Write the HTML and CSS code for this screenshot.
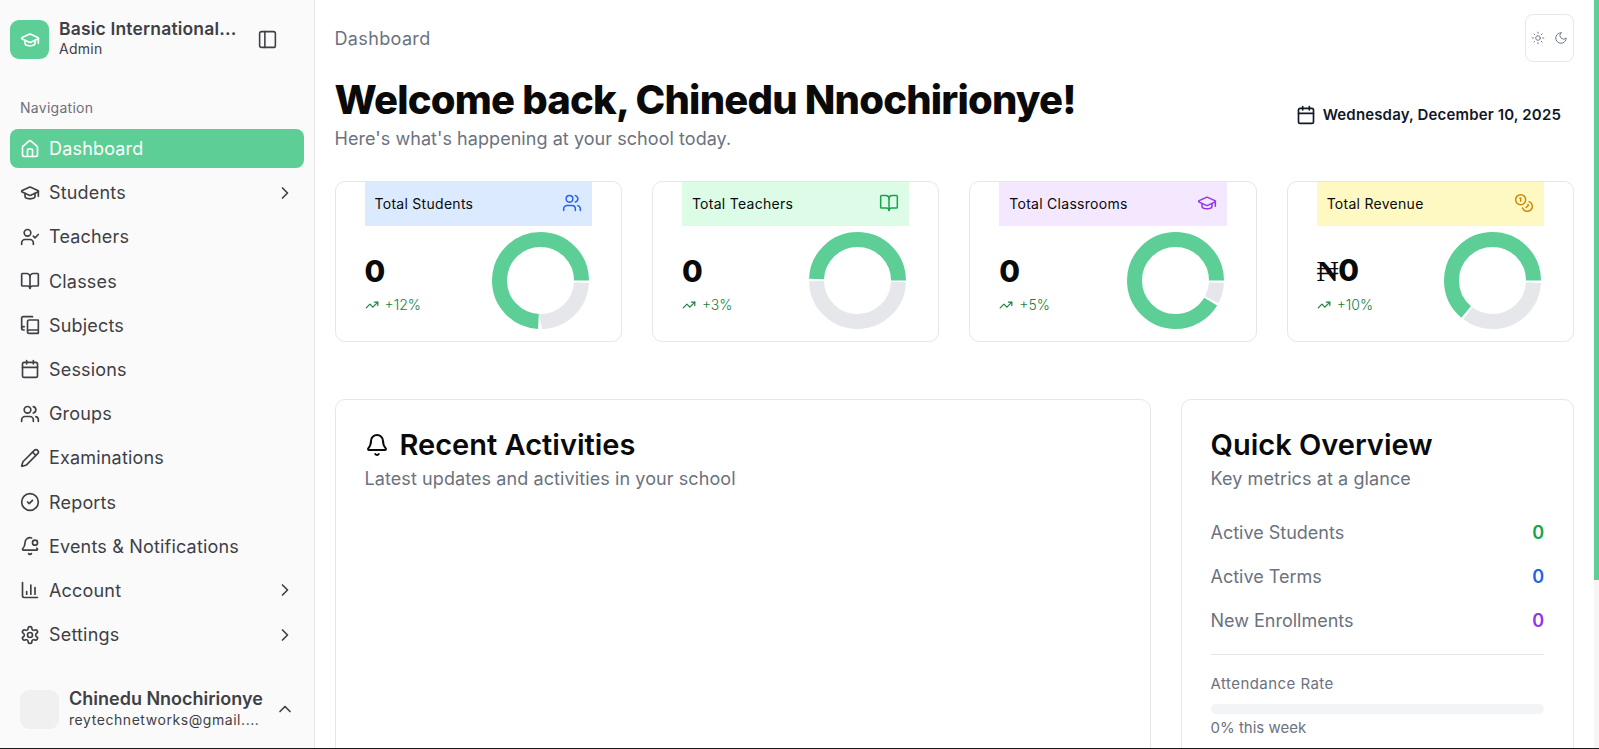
FILE: index.html
```html
<!DOCTYPE html>
<html lang="en">
<head>
    <meta charset="UTF-8">
    <meta name="viewport" content="width=device-width, initial-scale=1.0">
    <title>Dashboard</title>
    <link rel="stylesheet" href="styles.css">
</head>
<body>
    <!-- Lucide icons -->
    <svg class="sprite" xmlns="http://www.w3.org/2000/svg">
        <symbol id="i-cap" viewBox="0 0 24 24"><path d="M21.42 10.922a1 1 0 0 0-.019-1.838L12.83 5.18a2 2 0 0 0-1.66 0L2.6 9.08a1 1 0 0 0 0 1.832l8.57 3.908a2 2 0 0 0 1.66 0z"/><path d="M22 10v6"/><path d="M6 12.5V16a6 3 0 0 0 12 0v-3.5"/></symbol>
        <symbol id="i-panel" viewBox="0 0 24 24"><rect width="18" height="18" x="3" y="3" rx="2"/><path d="M9 3v18"/></symbol>
        <symbol id="i-house" viewBox="0 0 24 24"><path d="M15 21v-8a1 1 0 0 0-1-1h-4a1 1 0 0 0-1 1v8"/><path d="M3 10a2 2 0 0 1 .709-1.528l7-5.999a2 2 0 0 1 2.582 0l7 5.999A2 2 0 0 1 21 10v9a2 2 0 0 1-2 2H5a2 2 0 0 1-2-2z"/></symbol>
        <symbol id="i-user-check" viewBox="0 0 24 24"><path d="M16 21v-2a4 4 0 0 0-4-4H6a4 4 0 0 0-4 4v2"/><circle cx="9" cy="7" r="4"/><path d="m16 11 2 2 4-4"/></symbol>
        <symbol id="i-book" viewBox="0 0 24 24"><path d="M12 7v14"/><path d="M3 18a1 1 0 0 1-1-1V4a1 1 0 0 1 1-1h5a4 4 0 0 1 4 4 4 4 0 0 1 4-4h5a1 1 0 0 1 1 1v13a1 1 0 0 1-1 1h-6a3 3 0 0 0-3 3 3 3 0 0 0-3-3z"/></symbol>
        <symbol id="i-book-copy" viewBox="0 0 24 24"><path d="M2 16V4a2 2 0 0 1 2-2h11"/><path d="M22 18H11a2 2 0 1 0 0 4h10.5a.5.5 0 0 0 .5-.5v-15a.5.5 0 0 0-.5-.5H11a2 2 0 0 0-2 2v12"/><path d="M5 14H4a2 2 0 1 0 0 4h1"/></symbol>
        <symbol id="i-calendar" viewBox="0 0 24 24"><path d="M8 2v4"/><path d="M16 2v4"/><rect width="18" height="18" x="3" y="4" rx="2"/><path d="M3 10h18"/></symbol>
        <symbol id="i-users" viewBox="0 0 24 24"><path d="M16 21v-2a4 4 0 0 0-4-4H6a4 4 0 0 0-4 4v2"/><circle cx="9" cy="7" r="4"/><path d="M22 21v-2a4 4 0 0 0-3-3.87"/><path d="M16 3.13a4 4 0 0 1 0 7.75"/></symbol>
        <symbol id="i-pencil" viewBox="0 0 24 24"><path d="M21.174 6.812a1 1 0 0 0-3.986-3.987L3.842 16.174a2 2 0 0 0-.5.83l-1.321 4.352a.5.5 0 0 0 .623.622l4.353-1.32a2 2 0 0 0 .83-.497z"/><path d="m15 5 4 4"/></symbol>
        <symbol id="i-check" viewBox="0 0 24 24"><circle cx="12" cy="12" r="10"/><path d="m9 12 2 2 4-4"/></symbol>
        <symbol id="i-bell-dot" viewBox="0 0 24 24"><path d="M10.268 21a2 2 0 0 0 3.464 0"/><path d="M13.916 2.314A6 6 0 0 0 6 8c0 4.499-1.411 5.956-2.74 7.327A1 1 0 0 0 4 17h16a1 1 0 0 0 .74-1.673 9 9 0 0 1-.585-.665"/><circle cx="18" cy="8" r="3"/></symbol>
        <symbol id="i-chart" viewBox="0 0 24 24"><path d="M3 3v16a2 2 0 0 0 2 2h16"/><path d="M8 17v-3"/><path d="M13 17V6"/><path d="M18 17V9"/></symbol>
        <symbol id="i-gear" viewBox="0 0 24 24"><path d="M12.22 2h-.44a2 2 0 0 0-2 2v.18a2 2 0 0 1-1 1.73l-.43.25a2 2 0 0 1-2 0l-.15-.08a2 2 0 0 0-2.73.73l-.22.38a2 2 0 0 0 .73 2.73l.15.1a2 2 0 0 1 1 1.72v.51a2 2 0 0 1-1 1.74l-.15.09a2 2 0 0 0-.73 2.73l.22.38a2 2 0 0 0 2.73.73l.15-.08a2 2 0 0 1 2 0l.43.25a2 2 0 0 1 1 1.73V20a2 2 0 0 0 2 2h.44a2 2 0 0 0 2-2v-.18a2 2 0 0 1 1-1.73l.43-.25a2 2 0 0 1 2 0l.15.08a2 2 0 0 0 2.73-.73l.22-.39a2 2 0 0 0-.73-2.73l-.15-.08a2 2 0 0 1-1-1.74v-.5a2 2 0 0 1 1-1.74l.15-.09a2 2 0 0 0 .73-2.73l-.22-.38a2 2 0 0 0-2.73-.73l-.15.08a2 2 0 0 1-2 0l-.43-.25a2 2 0 0 1-1-1.73V4a2 2 0 0 0-2-2z"/><circle cx="12" cy="12" r="3"/></symbol>
        <symbol id="i-right" viewBox="0 0 24 24"><path d="m9 18 6-6-6-6"/></symbol>
        <symbol id="i-up" viewBox="0 0 24 24"><path d="m18 15-6-6-6 6"/></symbol>
        <symbol id="i-sun" viewBox="0 0 24 24"><circle cx="12" cy="12" r="4"/><path d="M12 2v2"/><path d="M12 20v2"/><path d="m4.93 4.93 1.41 1.41"/><path d="m17.66 17.66 1.41 1.41"/><path d="M2 12h2"/><path d="M20 12h2"/><path d="m6.34 17.66-1.41 1.41"/><path d="m19.07 4.93-1.41 1.41"/></symbol>
        <symbol id="i-moon" viewBox="0 0 24 24"><path d="M12 3a6 6 0 0 0 9 9 9 9 0 1 1-9-9Z"/></symbol>
        <symbol id="i-trend" viewBox="0 0 24 24"><path d="M22 7 13.5 15.5 8.5 10.5 2 17"/><path d="M16 7h6v6"/></symbol>
        <symbol id="i-coins" viewBox="0 0 24 24"><circle cx="8" cy="8" r="6"/><path d="M18.09 10.37A6 6 0 1 1 10.34 18"/><path d="M7 6h1v4"/><path d="m16.71 13.88.7.71-2.82 2.82"/></symbol>
        <symbol id="i-bell" viewBox="0 0 24 24"><path d="M10.268 21a2 2 0 0 0 3.464 0"/><path d="M3.262 15.326A1 1 0 0 0 4 17h16a1 1 0 0 0 .74-1.673C19.41 13.956 18 12.499 18 8A6 6 0 0 0 6 8c0 4.499-1.411 5.956-2.738 7.326"/></symbol>
    </svg>

    <div class="app">
        <aside class="sidebar">
            <div class="brand">
                <div class="brand-logo"><svg class="icon"><use href="#i-cap"/></svg></div>
                <div class="brand-text">
                    <div class="brand-name">Basic International...</div>
                    <div class="brand-role">Admin</div>
                </div>
                <svg class="icon panel-toggle"><use href="#i-panel"/></svg>
            </div>

            <div class="nav-label">Navigation</div>

            <nav class="nav">
                <a class="nav-item active"><svg class="icon"><use href="#i-house"/></svg><span>Dashboard</span></a>
                <a class="nav-item"><svg class="icon"><use href="#i-cap"/></svg><span>Students</span><svg class="icon chevron"><use href="#i-right"/></svg></a>
                <a class="nav-item"><svg class="icon"><use href="#i-user-check"/></svg><span>Teachers</span></a>
                <a class="nav-item"><svg class="icon"><use href="#i-book"/></svg><span>Classes</span></a>
                <a class="nav-item"><svg class="icon"><use href="#i-book-copy"/></svg><span>Subjects</span></a>
                <a class="nav-item"><svg class="icon"><use href="#i-calendar"/></svg><span>Sessions</span></a>
                <a class="nav-item"><svg class="icon"><use href="#i-users"/></svg><span>Groups</span></a>
                <a class="nav-item"><svg class="icon"><use href="#i-pencil"/></svg><span>Examinations</span></a>
                <a class="nav-item"><svg class="icon"><use href="#i-check"/></svg><span>Reports</span></a>
                <a class="nav-item"><svg class="icon"><use href="#i-bell-dot"/></svg><span>Events &amp; Notifications</span></a>
                <a class="nav-item"><svg class="icon"><use href="#i-chart"/></svg><span>Account</span><svg class="icon chevron"><use href="#i-right"/></svg></a>
                <a class="nav-item"><svg class="icon"><use href="#i-gear"/></svg><span>Settings</span><svg class="icon chevron"><use href="#i-right"/></svg></a>
            </nav>

            <div class="user">
                <div class="user-avatar"></div>
                <div class="user-text">
                    <div class="user-name">Chinedu Nnochirionye</div>
                    <div class="user-mail">reytechnetworks@gmail....</div>
                </div>
                <svg class="icon user-chevron"><use href="#i-up"/></svg>
            </div>
        </aside>

        <main class="main">
            <div class="topbar">
                <div class="crumb">Dashboard</div>
                <div class="theme-toggle">
                    <svg class="icon"><use href="#i-sun"/></svg>
                    <svg class="icon"><use href="#i-moon"/></svg>
                </div>
            </div>

            <div class="hero">
                <div>
                    <h1>Welcome back, Chinedu Nnochirionye!</h1>
                    <p>Here's what's happening at your school today.</p>
                </div>
                <div class="hero-date">
                    <svg class="icon"><use href="#i-calendar"/></svg>
                    <span>Wednesday, December 10, 2025</span>
                </div>
            </div>

            <div class="stats">
                <div class="stat">
                    <div class="stat-head blue"><span>Total Students</span><svg class="icon"><use href="#i-users"/></svg></div>
                    <div class="stat-body">
                        <div class="stat-numbers">
                            <div class="stat-value">0</div>
                            <div class="stat-trend"><svg class="icon"><use href="#i-trend"/></svg>+12%</div>
                        </div>
                        <svg class="donut" viewBox="0 0 97 97">
                            <circle class="arc-rest" cx="48.5" cy="48.5" r="41" pathLength="360" stroke-dasharray="87 273" stroke-dashoffset="-270"/>
                            <circle class="arc-fill" cx="48.5" cy="48.5" r="41" pathLength="360" stroke-dasharray="267 93"/>
                        </svg>
                    </div>
                </div>

                <div class="stat">
                    <div class="stat-head green"><span>Total Teachers</span><svg class="icon"><use href="#i-book"/></svg></div>
                    <div class="stat-body">
                        <div class="stat-numbers">
                            <div class="stat-value">0</div>
                            <div class="stat-trend"><svg class="icon"><use href="#i-trend"/></svg>+3%</div>
                        </div>
                        <svg class="donut" viewBox="0 0 97 97">
                            <circle class="arc-rest" cx="48.5" cy="48.5" r="41" pathLength="360" stroke-dasharray="177 183" stroke-dashoffset="-181"/>
                            <circle class="arc-fill" cx="48.5" cy="48.5" r="41" pathLength="360" stroke-dasharray="178 182"/>
                        </svg>
                    </div>
                </div>

                <div class="stat">
                    <div class="stat-head purple"><span>Total Classrooms</span><svg class="icon"><use href="#i-cap"/></svg></div>
                    <div class="stat-body">
                        <div class="stat-numbers">
                            <div class="stat-value">0</div>
                            <div class="stat-trend"><svg class="icon"><use href="#i-trend"/></svg>+5%</div>
                        </div>
                        <svg class="donut" viewBox="0 0 97 97">
                            <circle class="arc-rest" cx="48.5" cy="48.5" r="41" pathLength="360" stroke-dasharray="25 335" stroke-dashoffset="-332"/>
                            <circle class="arc-fill" cx="48.5" cy="48.5" r="41" pathLength="360" stroke-dasharray="329 31"/>
                        </svg>
                    </div>
                </div>

                <div class="stat">
                    <div class="stat-head yellow"><span>Total Revenue</span><svg class="icon"><use href="#i-coins"/></svg></div>
                    <div class="stat-body">
                        <div class="stat-numbers">
                            <div class="stat-value"><span class="naira">₦</span>0</div>
                            <div class="stat-trend"><svg class="icon"><use href="#i-trend"/></svg>+10%</div>
                        </div>
                        <svg class="donut" viewBox="0 0 97 97">
                            <circle class="arc-rest" cx="48.5" cy="48.5" r="41" pathLength="360" stroke-dasharray="124 236" stroke-dashoffset="-233"/>
                            <circle class="arc-fill" cx="48.5" cy="48.5" r="41" pathLength="360" stroke-dasharray="230 130"/>
                        </svg>
                    </div>
                </div>
            </div>

            <div class="panels">
                <section class="panel">
                    <h2><svg class="icon"><use href="#i-bell"/></svg>Recent Activities</h2>
                    <p class="panel-sub">Latest updates and activities in your school</p>
                </section>

                <section class="panel">
                    <h2>Quick Overview</h2>
                    <p class="panel-sub">Key metrics at a glance</p>

                    <div class="metrics">
                        <div class="metric"><span>Active Students</span><b class="text-green">0</b></div>
                        <div class="metric"><span>Active Terms</span><b class="text-blue">0</b></div>
                        <div class="metric"><span>New Enrollments</span><b class="text-purple">0</b></div>
                    </div>

                    <div class="attendance">
                        <div class="attendance-label">Attendance Rate</div>
                        <div class="progress"></div>
                        <div class="attendance-note">0% this week</div>
                    </div>
                </section>
            </div>
        </main>
    </div>
</body>
</html>
```

FILE: styles.css
```css
* {
    margin: 0;
    padding: 0;
    box-sizing: border-box;
}

html, body {
    height: 100%;
    overflow: hidden;
}

body {
    font-family: Inter, "Noto Sans", sans-serif;
    background: white;
    color: #0a0a0a;
}

.sprite {
    display: none;
}

.icon {
    width: 20px;
    height: 20px;
    flex-shrink: 0;
    fill: none;
    stroke: currentColor;
    stroke-width: 2;
    stroke-linecap: round;
    stroke-linejoin: round;
}

.app {
    display: flex;
    height: 100vh;
    border-bottom: 1px solid #1a1a1a;
}

/* sidebar */
.sidebar {
    width: 315px;
    flex-shrink: 0;
    display: flex;
    flex-direction: column;
    background: #fafafa;
    border-right: 1px solid #e5e7eb;
    color: #3f3f46;
}

.brand {
    display: flex;
    align-items: center;
    padding: 20px 0 0 10px;
}

.brand-logo {
    width: 39px;
    height: 39px;
    border-radius: 9px;
    background: #5dcf96;
    color: white;
    display: flex;
    align-items: center;
    justify-content: center;
}

.brand-text {
    margin: -2px 0 0 10px;
    width: 198px;
}

.brand-name {
    font-size: 17.5px;
    font-weight: 600;
    line-height: 20px;
    letter-spacing: 0.01em;
}

.brand-role {
    font-size: 14px;
    line-height: 20px;
    letter-spacing: 0.02em;
}

.panel-toggle {
    width: 21px;
    height: 21px;
    stroke-width: 1.8;
}

.nav-label {
    margin: 39px 0 0 20px;
    font-size: 14px;
    line-height: 20px;
    color: #6f6f78;
    letter-spacing: 0.02em;
}

.nav {
    display: flex;
    flex-direction: column;
    gap: 5.2px;
    margin: 11px 10px 0;
}

.nav-item {
    display: flex;
    align-items: center;
    gap: 9px;
    height: 39px;
    padding: 0 9px 0 10px;
    border-radius: 8px;
    font-size: 18px;
    letter-spacing: 0.01em;
}

.nav-item.active {
    background: #5dcf96;
    color: white;
}

.chevron {
    margin-left: auto;
}

.user {
    display: flex;
    align-items: center;
    margin-top: auto;
    padding: 0 0 18px 20px;
}

.user-avatar {
    width: 39px;
    height: 39px;
    flex-shrink: 0;
    border-radius: 9px;
    background: #f0f0f0;
}

.user-text {
    margin-left: 10px;
    width: 206px;
}

.user-name {
    font-size: 18px;
    font-weight: 600;
    line-height: 22px;
}

.user-mail {
    font-size: 14px;
    line-height: 20px;
    letter-spacing: 0.04em;
}

/* main */
.main {
    flex: 1;
    min-width: 0;
    padding: 14px 25px 0 19.5px;
    overflow: hidden;
}

.topbar {
    display: flex;
    align-items: center;
    justify-content: space-between;
}

.crumb {
    font-size: 18px;
    color: #6b7280;
    letter-spacing: 0.02em;
}

.theme-toggle {
    display: flex;
    align-items: center;
    justify-content: space-between;
    width: 49px;
    height: 48px;
    padding: 0 5px;
    border: 1px solid #e5e7eb;
    border-radius: 8px;
    color: #6b7280;
}

.theme-toggle .icon {
    width: 14px;
    height: 14px;
    stroke-width: 1.6;
}

.hero {
    display: flex;
    align-items: center;
    justify-content: space-between;
    margin: 14px 0 28px;
}

.hero h1 {
    font-size: 40px;
    line-height: 48px;
    font-weight: 800;
    letter-spacing: -0.02em;
}

.hero p {
    margin-top: 1px;
    font-size: 18px;
    line-height: 28px;
    color: #6b7280;
    letter-spacing: 0.003em;
}

.hero-date {
    display: flex;
    align-items: center;
    gap: 7px;
    margin-right: 13px;
    font-size: 15px;
    font-weight: 600;
    color: #111827;
    letter-spacing: 0.01em;
}

.stats {
    display: grid;
    grid-template-columns: repeat(4, 1fr);
    gap: 30px;
}

.stat {
    height: 161px;
    padding: 0 29px;
    border: 1px solid #e5e7eb;
    border-radius: 10px;
}

.stat-head {
    display: flex;
    align-items: center;
    justify-content: space-between;
    height: 44px;
    padding: 0 10px 2px;
    font-size: 14px;
    letter-spacing: 0.02em;
}

.blue { background: #dbeafe; color: #2563eb; }
.green { background: #dcfce7; color: #16a34a; }
.purple { background: #f3e8ff; color: #9333ea; }
.yellow { background: #fef9c3; color: #ca8a04; }

.stat-head span {
    color: #0a0a0a;
}

.stat-head .icon {
    stroke-width: 1.8;
}

.stat-body {
    display: flex;
    align-items: center;
    justify-content: space-between;
    padding: 6px 3px 0 0;
}

.stat-numbers {
    margin-top: 6px;
}

.stat-value {
    font-size: 30px;
    line-height: 36px;
    font-weight: 800;
}

.naira {
    font-family: "Liberation Serif", serif;
}

.stat-trend {
    display: flex;
    align-items: center;
    gap: 6px;
    margin-top: 6px;
    font-size: 14px;
    font-weight: 300;
    line-height: 20px;
    color: #15803d;
}

.stat-trend .icon {
    width: 14px;
    height: 14px;
}

.donut {
    width: 97px;
    height: 97px;
    fill: none;
    stroke-width: 15;
    transform: scaleY(-1);
}

.arc-fill { stroke: #5dcf96; }
.arc-rest { stroke: #e5e7eb; }

.panels {
    display: grid;
    grid-template-columns: 1fr 393.5px;
    gap: 30px;
    margin-top: 57px;
}

.panel {
    height: 500px;
    padding: 27px 29px;
    border: 1px solid #e5e7eb;
    border-radius: 10px;
}

.panel h2 {
    display: flex;
    align-items: center;
    gap: 11px;
    font-size: 29px;
    line-height: 36px;
    font-weight: 600;
}

.panel h2 .icon {
    width: 24px;
    height: 24px;
}

.panel-sub {
    margin-top: 3px;
    font-size: 18px;
    line-height: 26px;
    color: #6b7280;
    letter-spacing: 0.005em;
}

.metrics {
    display: flex;
    flex-direction: column;
    gap: 16px;
    margin-top: 27px;
    padding-bottom: 19px;
    border-bottom: 1px solid #e5e7eb;
}

.metric {
    display: flex;
    justify-content: space-between;
    font-size: 18px;
    line-height: 28px;
    color: #6b7280;
}

.metric b {
    font-weight: 600;
}

.text-green { color: #16a34a; }
.text-blue { color: #2563eb; }
.text-purple { color: #9333ea; }

.attendance {
    padding-top: 19px;
    font-size: 15px;
    line-height: 20px;
    color: #6b7280;
}

.attendance-label {
    letter-spacing: 0.03em;
}

.progress {
    height: 10px;
    margin-top: 10px;
    border-radius: 5px;
    background: #f3f4f6;
}

.attendance-note {
    margin-top: 4px;
}

/* page scrollbar, drawn over the window edge */
.app::after {
    content: "";
    position: absolute;
    top: 0;
    right: 0;
    width: 5px;
    height: 748px;
    background: linear-gradient(#5dcf96 580px, #f5f5f5 580px);
}
```
